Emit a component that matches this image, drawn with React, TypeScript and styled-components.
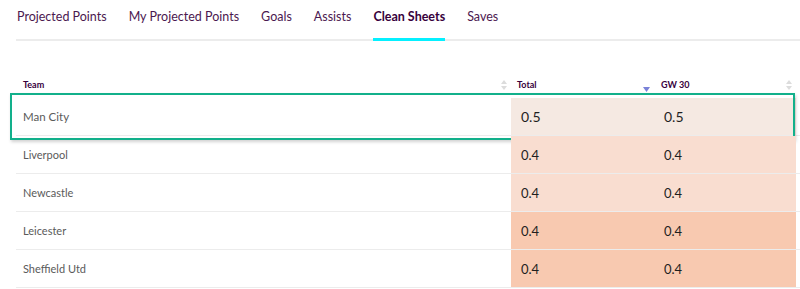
import styled, { createGlobalStyle } from 'styled-components';

const tabs = [
  'Projected Points',
  'My Projected Points',
  'Goals',
  'Assists',
  'Clean Sheets',
  'Saves',
];

const rows = [
  { team: 'Man City', total: '0.5', gw: '0.5', bg: '#f5e9e2' },
  { team: 'Liverpool', total: '0.4', gw: '0.4', bg: '#f9ddd0' },
  { team: 'Newcastle', total: '0.4', gw: '0.4', bg: '#f9ddd0' },
  { team: 'Leicester', total: '0.4', gw: '0.4', bg: '#f8c9b0' },
  { team: 'Sheffield Utd', total: '0.4', gw: '0.4', bg: '#f8c9b0' },
];

const GlobalStyle = createGlobalStyle`
  body {
    margin: 0;
    background: #fff;
    font-family: Lato, "Noto Sans", sans-serif;
    overflow: hidden;
  }
`;

function SortIcon() {
  return (
    <svg width="6" height="10" viewBox="0 0 6 10">
      <path d="M3 0L6 4H0Z" fill="#dcdcdc" />
      <path d="M3 10L6 6H0Z" fill="#dcdcdc" />
    </svg>
  );
}

function SortDesc() {
  return (
    <svg width="7" height="5" viewBox="0 0 7 5">
      <path d="M0 0H7L3.5 5Z" fill="#7a82d8" />
    </svg>
  );
}

export default function App() {
  return (
    <Page>
      <GlobalStyle />
      <TabBar>
        {tabs.map((t) => (
          <Tab key={t} $active={t === 'Clean Sheets'}>
            {t}
          </Tab>
        ))}
      </TabBar>
      <Table>
        <HeaderRow>
          <HeadCell>
            Team
            <SortIcon />
          </HeadCell>
          <HeadCell>
            Total
            <SortDesc />
          </HeadCell>
          <HeadCell>
            GW 30
            <SortIcon />
          </HeadCell>
        </HeaderRow>
        {rows.map((r, i) => (
          <Row key={r.team} $highlight={i === 0}>
            <TeamCell $highlight={i === 0}>{r.team}</TeamCell>
            <ValueCell $bg={r.bg} $highlight={i === 0}>
              {r.total}
            </ValueCell>
            <ValueCell $bg={r.bg} $highlight={i === 0}>
              {r.gw}
            </ValueCell>
          </Row>
        ))}
      </Table>
    </Page>
  );
}

const Page = styled.div`
  width: 800px;
  height: 289px;
  overflow: hidden;
`;

const TabBar = styled.div`
  display: flex;
  gap: 22px;
  margin-left: 16px;
  padding-left: 1px;
  border-bottom: 2px solid #ececec;
  height: 39px;
`;

const Tab = styled.div<{ $active?: boolean }>`
  font-size: 12.5px;
  line-height: 16px;
  padding-top: 9px;
  color: #37003c;
  font-weight: ${(p) => (p.$active ? 700 : 400)};
  border-bottom: 3px solid ${(p) => (p.$active ? '#05f0ff' : 'transparent')};
  height: 41px;
  box-sizing: border-box;
  opacity: ${(p) => (p.$active ? 1 : 0.9)};
`;

const Table = styled.div`
  margin-top: 30px;
  margin-left: 16px;
  width: 784px;
`;

const grid = `
  display: grid;
  grid-template-columns: 495px 143px 1fr;
`;

const HeaderRow = styled.div`
  ${grid};
  height: 27px;
`;

const HeadCell = styled.div`
  display: flex;
  align-items: center;
  justify-content: space-between;
  padding: 0 4px 0 7px;
  font-size: 9px;
  font-weight: 700;
  color: #37003c;

  &:nth-child(2) {
    padding-left: 6px;
    align-items: flex-end;
    padding-bottom: 8px;
    line-height: 10px;
  }
  &:nth-child(2) svg {
    margin-bottom: -2px;
  }
  &:nth-child(3) {
    padding-left: 7px;
    padding-right: 8px;
  }
`;

const Row = styled.div<{ $highlight?: boolean }>`
  ${grid};
  height: 38px;
  box-sizing: border-box;
  position: relative;
  border-bottom: 1px solid #ececec;

  ${(p) =>
    p.$highlight &&
    `
    &::after {
      content: '';
      position: absolute;
      left: -6px;
      right: 5px;
      top: -5px;
      bottom: -5px;
      border: 2px solid #12b08b;
      box-shadow: 1px 2px 3px rgba(0, 0, 0, 0.18);
      pointer-events: none;
    }
  `}
`;

const TeamCell = styled.div<{ $highlight?: boolean }>`
  display: flex;
  align-items: center;
  padding-left: 7px;
  font-size: ${(p) => (p.$highlight ? '11.5px' : '11px')};
  color: #5a5a5a;
`;

const ValueCell = styled.div<{ $bg: string; $highlight?: boolean }>`
  display: flex;
  align-items: center;
  padding-left: 10px;
  background: ${(p) => p.$bg};
  font-size: ${(p) => (p.$highlight ? '14px' : '13px')};
  color: #1f1f1f;

  &:last-child {
    margin-right: 4px;
  }
`;
